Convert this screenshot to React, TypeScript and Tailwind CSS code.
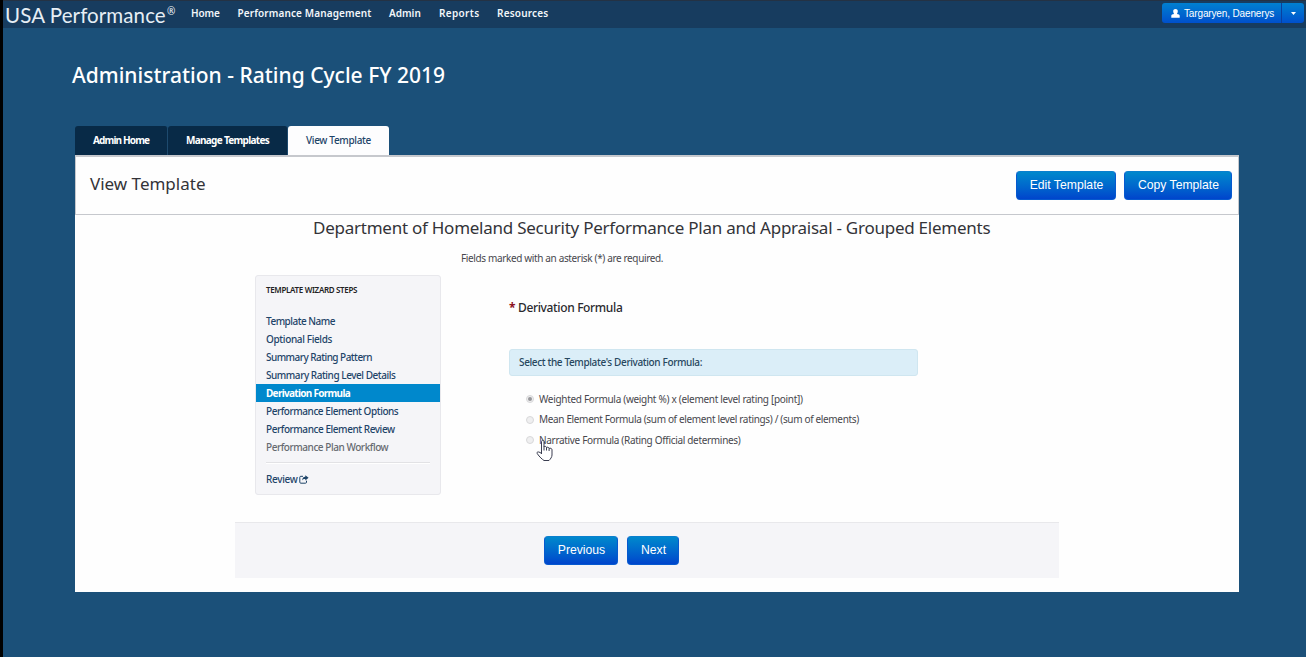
import type { ReactNode } from "react";

const steps: { label: string; className: string }[] = [
  { label: "Template Name", className: "text-[#1e4468] tracking-[-0.51px]" },
  { label: "Optional Fields", className: "text-[#1e4468] tracking-[-0.36px]" },
  { label: "Summary Rating Pattern", className: "text-[#1e4468] tracking-[-0.54px]" },
  { label: "Summary Rating Level Details", className: "text-[#1e4468] tracking-[-0.46px]" },
  { label: "Derivation Formula", className: "bg-[#0088cc] font-bold text-white tracking-[-0.7px]" },
  { label: "Performance Element Options", className: "text-[#1e4468] tracking-[-0.45px]" },
  { label: "Performance Element Review", className: "text-[#1e4468] tracking-[-0.44px]" },
  { label: "Performance Plan Workflow", className: "text-[#666a70] tracking-[-0.45px]" },
];

const formulas = [
  { label: "Weighted Formula (weight %) x (element level rating [point])", checked: true, className: "tracking-[-0.3px]" },
  { label: "Mean Element Formula (sum of element level ratings) / (sum of elements)", checked: false, className: "tracking-[-0.345px]" },
  { label: "Narrative Formula (Rating Official determines)", checked: false, className: "tracking-[-0.32px]" },
];

function Button({ className, children }: { className: string; children: ReactNode }) {
  return (
    <button
      className={`flex h-[29px] items-center justify-center rounded-[4px] border border-[#0659cf] border-t-[#0a7fce] bg-linear-to-b from-[#0088cc] to-[#0044cc] pl-px font-['Liberation_Sans',sans-serif] text-[12.2px] whitespace-nowrap text-white ${className}`}
    >
      {children}
    </button>
  );
}

function Header() {
  return (
    <header className="flex h-7 items-start border-t border-[#243244] bg-[#173c5f] text-[10px] font-semibold text-[#f2f6fa]">
      <div className="flex h-[27px] w-[188px] shrink-0 pl-[2px] whitespace-nowrap">
        <span className="w-[162px] font-['Lato',sans-serif] text-[20.5px] leading-[28px] font-normal tracking-[0.1px] text-[#e6eef5]">USA Performance</span>
        <span className="pt-[4px] text-[10px] leading-[12px] font-normal">®</span>
      </div>
      <nav className="flex leading-[24px] whitespace-nowrap">
        <a className="w-[46.5px] tracking-[-0.1px]">Home</a>
        <a className="w-[151.5px] tracking-[0.12px]">Performance Management</a>
        <a className="w-[50px]">Admin</a>
        <a className="w-[58px] tracking-[0.35px]">Reports</a>
        <a className="tracking-[0.2px]">Resources</a>
      </nav>
      <div className="mt-[2px] mr-[2px] ml-auto flex h-5 rounded-[3px] bg-linear-to-b from-[#0080d0] to-[#004fcc] font-['Liberation_Sans',sans-serif] font-normal text-white">
        <div className="flex w-[120px] items-center border-r border-[#0b3f9e] pl-[9px]">
          <svg className="mr-[4px] h-[9px] w-[9px]" viewBox="0 0 9 9" fill="currentColor">
            <path d="M4.5 0C6.300 0 6.900 1.100 6.800 2.600 6.700 3.800 6.300 4.600 5.900 5.100 7.600 5.300 8.700 5.600 8.700 6.800V8.700H.3V6.800C.3 5.600 1.400 5.300 3.100 5.100 2.700 4.600 2.300 3.800 2.200 2.600 2.100 1.100 2.700 0 4.500 0Z" />
          </svg>
          <span className="whitespace-nowrap tracking-[-0.14px]">Targaryen, Daenerys</span>
        </div>
        <div className="flex w-[22px] items-center justify-center">
          <svg className="h-[3px] w-[5px]" viewBox="0 0 5 3" fill="currentColor"><path d="M0 0H5L2.500 3Z" /></svg>
        </div>
      </div>
    </header>
  );
}

function Tabs() {
  return (
    <div className="flex h-[29px] text-[10px] leading-[29px] font-bold text-white">
      <div className="w-[93px] rounded-t-[3px] border-r border-[#1d4a6e] bg-[#082a47] pl-[18px] whitespace-nowrap tracking-[-0.85px]">Admin Home</div>
      <div className="w-[120px] rounded-t-[3px] border-r border-[#1d4a6e] bg-[#082a47] pl-[18px] whitespace-nowrap tracking-[-0.7px]">Manage Templates</div>
      <div className="w-[101px] rounded-t-[3px] bg-[#fdfdfe] pl-[18px] font-medium whitespace-nowrap text-[#1e4468] tracking-[-0.34px]">View Template</div>
    </div>
  );
}

function WizardSteps() {
  return (
    <aside className="h-[220px] w-[186px] rounded-[3px] border border-[#e8e8ec] bg-[#f5f5f8] text-[10px] font-medium whitespace-nowrap">
      <h3 className="pt-[5px] pl-[10px] text-[8px] leading-[18px] font-semibold text-[#222] tracking-[-0.33px]">TEMPLATE WIZARD STEPS</h3>
      <ul className="mt-[13px]">
        {steps.map((step) => (
          <li key={step.label} className={`h-[18px] pl-[10px] leading-[19px] ${step.className}`}>{step.label}</li>
        ))}
      </ul>
      <div className="mx-[10px] mt-[6px] h-[2px] border-t border-[#e2e2e5] bg-white" />
      <div className="mt-[6px] flex items-center pl-[10px] leading-[18px] text-[#1e4468]">
        <span className="tracking-[-0.33px]">Review</span>
        <svg className="ml-[2px] h-[9px] w-[10px]" viewBox="0 0 10 9" fill="none" stroke="currentColor">
          <path d="M4 1.300H1.800Q.8 1.300.8 2.300V7.200Q.8 8.200 1.800 8.200H6.500Q7.500 8.200 7.500 7.200V5.700" />
          <path d="M6.300.2 9.600 2.800 6.300 5.400V3.900C4.800 3.800 3.900 4.200 3.200 5.400 3.200 3.200 4.300 1.900 6.300 1.700Z" fill="currentColor" stroke="none" />
        </svg>
      </div>
    </aside>
  );
}

function Derivation() {
  return (
    <section className="relative ml-[68px] w-[409px] pt-[23px] whitespace-nowrap">
      <h3 className="text-[12px] leading-5 font-medium text-[#2a2a2e]">
        <span className="inline-block w-[9px] font-bold text-[#8b1020]">*</span>
        <span className="tracking-[-0.35px]">Derivation Formula</span>
      </h3>
      <div className="mt-[31px] h-[27px] rounded-[3px] border border-[#cfe6f0] bg-[#dbeef8] pl-[9px] text-[10px] leading-[24px] font-medium text-[#27475e] tracking-[-0.37px]">
        Select the Template's Derivation Formula:
      </div>
      <div className="mt-[13px] pl-[17px] text-[10px] text-[#47474d]">
        {formulas.map((formula) => (
          <label key={formula.label} className="flex h-[20.600px] items-center">
            <span className="mr-[5px] flex h-2 w-2 items-center justify-center rounded-full border border-[#d8d8da] bg-[#efeff0]">
              {formula.checked && <span className="h-1 w-1 rounded-full bg-[#96969a]" />}
            </span>
            <span className={formula.className}>{formula.label}</span>
          </label>
        ))}
      </div>
      <svg className="absolute top-[164px] left-[26px] h-[24px] w-[20px]" viewBox="0 0 20 24" fill="#fff" stroke="#3a3d50" strokeLinejoin="round">
        <path d="M6.500 15V2.700C6.500.8 9 .8 9 2.700V8C9.500 7 11.300 7.200 11.500 8.600 12.200 7.800 13.900 8.200 14.100 9.500 15 8.800 17 9.400 17 10.700V16C17 18 15.500 20 14 21.500H9C7.400 20.500 4.500 18 2.300 14.700 1.200 12.800 3.500 12 6.500 14.500" />
        <path d="M9 7.500V11.500M11.500 8.500V11.500M14.100 9.500V12" fill="none" />
      </svg>
    </section>
  );
}

export default function App() {
  return (
    <div className="h-[657px] overflow-hidden border-l-[3px] border-black bg-[#1b5079] font-['Noto_Sans',sans-serif]">
      <Header />
      <h1 className="mt-[31px] pl-[69px] text-[21px] leading-8 font-medium whitespace-nowrap text-white tracking-[0.01px]">Administration - Rating Cycle FY 2019</h1>
      <main className="mt-[35px] ml-[72px] w-[1164px]">
        <Tabs />
        <div className="h-[437px] bg-[#fefefe]">
          <div className="flex h-[60px] items-start border border-t-2 border-[#c6c8cd] pr-[6px] pl-[14px]">
            <h2 className="mt-[13px] text-[17px] leading-7 text-[#333338]">View Template</h2>
            <Button className="mt-[14px] ml-auto w-[100px]">Edit Template</Button>
            <Button className="mt-[14px] ml-[8px] w-[108px]">Copy Template</Button>
          </div>
          <h2 className="pl-[238px] text-[17px] leading-[26px] whitespace-nowrap text-[#333338] tracking-[-0.25px]">
            Department of Homeland Security Performance Plan and Appraisal - Grouped Elements
          </h2>
          <p className="mt-[7px] pl-[386px] text-[10px] leading-5 whitespace-nowrap text-[#47474d] tracking-[-0.36px]">
            Fields marked with an asterisk (*) are required.
          </p>
          <div className="mt-[7px] flex pl-[180px]">
            <WizardSteps />
            <Derivation />
          </div>
          <div className="mt-[27px] ml-[160px] flex h-[56px] w-[824px] border-t border-[#e8e8eb] bg-[#f5f5f8] pt-[13px] pl-[309px]">
            <Button className="w-[74px]">Previous</Button>
            <Button className="ml-[9px] w-[52px]">Next</Button>
          </div>
        </div>
      </main>
    </div>
  );
}
